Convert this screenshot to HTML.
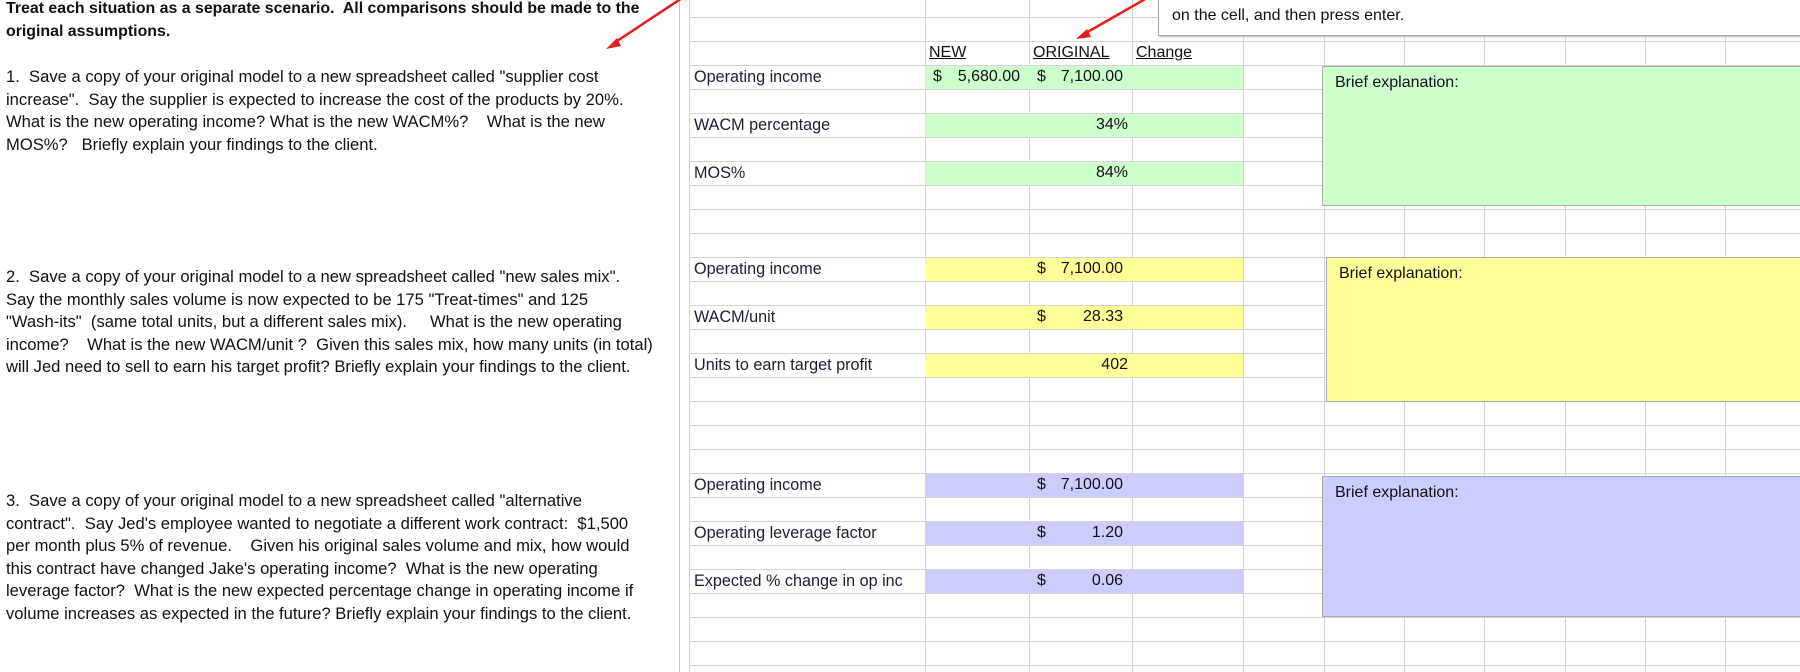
<!DOCTYPE html>
<html><head><meta charset="utf-8"><style>
html,body{margin:0;padding:0;}
body{width:1800px;height:672px;position:relative;overflow:hidden;background:#fff;font-family:"Liberation Sans",Arial,sans-serif;color:#111;}
.grid{position:absolute;left:689px;top:0;width:1111px;height:672px;
background-image:repeating-linear-gradient(to bottom,transparent 0,transparent 23px,#d4d4d4 23px,#d4d4d4 24px);
background-position:0 -6px;}
.v{position:absolute;top:0;height:672px;width:1px;background:#d4d4d4;}
.t{position:absolute;white-space:nowrap;font-size:16.6px;line-height:22.5px;}
.lab{position:absolute;left:694px;font-size:16.2px;white-space:nowrap;color:#1a1f33;}
.fill{position:absolute;left:925px;width:318px;height:23px;}
.g{background:#ccffcc}.y{background:#ffff99}.b{background:#ccccff}
.val{position:absolute;font-size:16px;white-space:nowrap;}
.box{position:absolute;border:1px solid #a9a9a9;box-sizing:border-box;}
.box span{position:absolute;left:12px;top:7px;font-size:16px;}
.hd{position:absolute;top:44px;font-size:16px;text-decoration:underline;}
</style></head><body>
<div class="grid"></div>
<div class="v" style="left:679px;background:#c8c8c8"></div>
<div class="v" style="left:689px"></div>
<div class="v" style="left:925px"></div>
<div class="v" style="left:1029px"></div>
<div class="v" style="left:1132px"></div>
<div class="v" style="left:1243px"></div>
<div class="v" style="left:1324px"></div>
<div class="v" style="left:1404px"></div>
<div class="v" style="left:1484px"></div>
<div class="v" style="left:1565px"></div>
<div class="v" style="left:1645px"></div>
<div class="v" style="left:1725px"></div>

<div class="t" style="left:6px;top:-2px;font-weight:bold;font-size:15.9px;">Treat each situation as a separate scenario.&nbsp; All comparisons should be made to the<br>original assumptions.</div>
<div class="t" style="left:6px;top:66px;">1.&nbsp; Save a copy of your original model to a new spreadsheet called "supplier cost<br>increase".&nbsp; Say the supplier is expected to increase the cost of the products by 20%.<br>What is the new operating income? What is the new WACM%?&nbsp;&nbsp;&nbsp; What is the new<br>MOS%?&nbsp;&nbsp; Briefly explain your findings to the client.</div>
<div class="t" style="left:6px;top:266px;">2.&nbsp; Save a copy of your original model to a new spreadsheet called "new sales mix".<br>Say the monthly sales volume is now expected to be 175 "Treat-times" and 125<br>"Wash-its"&nbsp; (same total units, but a different sales mix).&nbsp;&nbsp;&nbsp;&nbsp; What is the new operating<br>income?&nbsp;&nbsp;&nbsp; What is the new WACM/unit ?&nbsp; Given this sales mix, how many units (in total)<br>will Jed need to sell to earn his target profit? Briefly explain your findings to the client.</div>
<div class="t" style="left:6px;top:490px;">3.&nbsp; Save a copy of your original model to a new spreadsheet called "alternative<br>contract".&nbsp; Say Jed's employee wanted to negotiate a different work contract:&nbsp; $1,500<br>per month plus 5% of revenue.&nbsp;&nbsp;&nbsp; Given his original sales volume and mix, how would<br>this contract have changed Jake's operating income?&nbsp; What is the new operating<br>leverage factor?&nbsp; What is the new expected percentage change in operating income if<br>volume increases as expected in the future? Briefly explain your findings to the client.</div>

<div class="hd" style="left:929px">NEW</div>
<div class="hd" style="left:1033px">ORIGINAL</div>
<div class="hd" style="left:1136px">Change</div>

<div class="fill g" style="top:66px"></div>
<div class="fill g" style="top:114px"></div>
<div class="fill g" style="top:162px"></div>
<div class="fill y" style="top:258px"></div>
<div class="fill y" style="top:306px"></div>
<div class="fill y" style="top:354px"></div>
<div class="fill b" style="top:474px"></div>
<div class="fill b" style="top:522px"></div>
<div class="fill b" style="top:570px"></div>

<div class="lab" style="top:68px">Operating income</div>
<div class="lab" style="top:116px">WACM percentage</div>
<div class="lab" style="top:164px">MOS%</div>
<div class="lab" style="top:260px">Operating income</div>
<div class="lab" style="top:308px">WACM/unit</div>
<div class="lab" style="top:356px">Units to earn target profit</div>
<div class="lab" style="top:476px">Operating income</div>
<div class="lab" style="top:524px">Operating leverage factor</div>
<div class="lab" style="top:572px">Expected % change in op inc</div>

<div class="val" style="left:933px;top:68px">$</div><div class="val" style="right:780px;top:68px">5,680.00</div>
<div class="val" style="left:1037px;top:68px">$</div><div class="val" style="right:677px;top:68px">7,100.00</div>
<div class="val" style="right:672px;top:116px">34%</div>
<div class="val" style="right:672px;top:164px">84%</div>
<div class="val" style="left:1037px;top:260px">$</div><div class="val" style="right:677px;top:260px">7,100.00</div>
<div class="val" style="left:1037px;top:308px">$</div><div class="val" style="right:677px;top:308px">28.33</div>
<div class="val" style="right:672px;top:356px">402</div>
<div class="val" style="left:1037px;top:476px">$</div><div class="val" style="right:677px;top:476px">7,100.00</div>
<div class="val" style="left:1037px;top:524px">$</div><div class="val" style="right:677px;top:524px">1.20</div>
<div class="val" style="left:1037px;top:572px">$</div><div class="val" style="right:677px;top:572px">0.06</div>

<div class="box" style="left:1158px;top:-2px;width:660px;height:38px;background:#fff;box-shadow:1px 1px 2px #bbb;"><span style="top:8px;left:13px">on the cell, and then press enter.</span></div>
<div class="box g" style="left:1322px;top:66px;width:480px;height:140px;"><span>Brief explanation:</span></div>
<div class="box y" style="left:1326px;top:257px;width:476px;height:145px;"><span>Brief explanation:</span></div>
<div class="box b" style="left:1322px;top:476px;width:480px;height:141px;"><span>Brief explanation:</span></div>

<svg style="position:absolute;left:0;top:0" width="1800" height="672">
<line x1="682" y1="-2" x2="614" y2="43" stroke="#e81c1c" stroke-width="2.5"/>
<polygon points="606,49 617,38 621,46" fill="#e81c1c"/>
<line x1="1147" y1="-2" x2="1084" y2="34" stroke="#e81c1c" stroke-width="2.5"/>
<polygon points="1076,39 1087,29 1091,37" fill="#e81c1c"/>
</svg>
</body></html>
